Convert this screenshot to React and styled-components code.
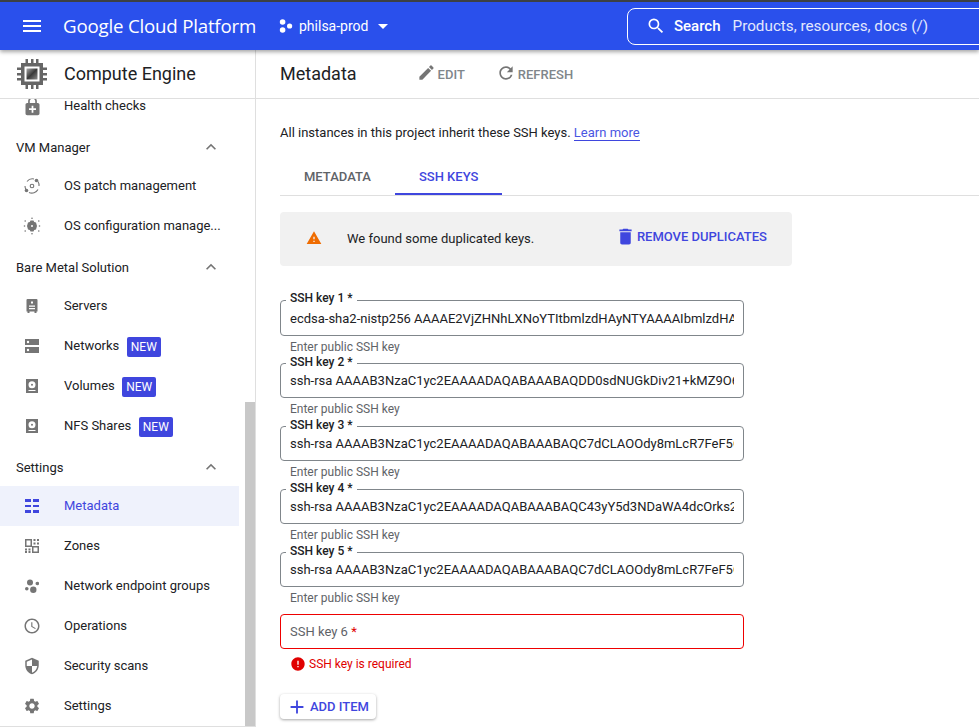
import React from "react";
import styled, { createGlobalStyle } from "styled-components";
import {
  MdMenu,
  MdSearch,
  MdArrowDropDown,
  MdEdit,
  MdRefresh,
  MdExpandLess,
  MdWarning,
  MdDelete,
  MdError,
  MdAdd,
  MdAccessTime,
  MdSettings,
  MdEnhancedEncryption,
  MdSecurity,
} from "react-icons/md";

const GlobalStyle = createGlobalStyle`
  html, body {
    margin: 0;
    height: 100%;
    overflow: hidden;
    background: #fff;
    font-family: Roboto, "Liberation Sans", sans-serif;
  }
`;

const ChipIcon = () => (
  <svg width="32" height="32" viewBox="0 0 32 32">
    <defs>
      <linearGradient id="chipFill" x1="0" y1="0" x2="1" y2="1">
        <stop offset="0" stopColor="#a8a8a8" />
        <stop offset="0.5" stopColor="#3a3a3a" />
        <stop offset="1" stopColor="#8c8c8c" />
      </linearGradient>
    </defs>
    <path
      fill="#666"
      d="M9.500 1H12v4H9.500zM15 1h2.500v4H15zM20 1h2.500v4H20zM9.500 27H12v4H9.500zM15 27h2.500v4H15zM20 27h2.500v4H20zM1 9.500h4V12H1zM1 15h4v2.500H1zM1 20h4v2.500H1zM27 9.500h4V12h-4zM27 15h4v2.500h-4zM27 20h4v2.500h-4z"
    />
    <path fill="#666" fillRule="evenodd" d="M5 5h22v22H5zM8.500 8.500v15h15v-15z" />
    <rect x="10.500" y="10.500" width="11" height="11" fill="url(#chipFill)" />
  </svg>
);

const ProjectIcon = () => (
  <svg width="14" height="14" viewBox="0 0 14 14" fill="#fff">
    <circle cx="3.600" cy="3" r="2.800" />
    <circle cx="3.600" cy="11" r="2.800" />
    <circle cx="10.600" cy="7" r="2.600" />
  </svg>
);

const PatchIcon = () => (
  <svg width="18" height="18" viewBox="0 0 18 18" fill="none" stroke="#757575" strokeWidth="1.100">
    <path d="M4 4.500A7 7 0 0 1 11 2" />
    <path d="M2 9a7 7 0 0 0 1 3.500" />
    <path d="M6 15.500a7 7 0 0 0 9-3" />
    <path d="M15 4.500A7 7 0 0 1 16 9" />
    <circle cx="9" cy="9" r="1.800" />
    <circle cx="13.500" cy="3.500" r="1.800" fill="#757575" stroke="none" />
    <circle cx="3.500" cy="13.500" r="1.800" fill="#757575" stroke="none" />
  </svg>
);

const ConfigIcon = () => (
  <svg width="18" height="18" viewBox="0 0 18 18" fill="#757575">
    <path
      fillRule="evenodd"
      d="M7.500 3.500h3l.7 1.600 1.800.4L14 9l-1 3.500-1.800.4-.7 1.600h-3l-.7-1.600-1.800-.4L4 9l1-3.500 1.800-.4zM9 8a1 1 0 1 0 0 2 1 1 0 0 0 0-2z"
    />
    <circle cx="9" cy="1.300" r=".8" />
    <circle cx="9" cy="16.700" r=".8" />
    <circle cx="2.200" cy="4" r=".8" />
    <circle cx="15.800" cy="4" r=".8" />
    <circle cx="2.200" cy="14" r=".8" />
    <circle cx="15.800" cy="14" r=".8" />
    <circle cx="1.500" cy="9" r=".8" />
    <circle cx="16.500" cy="9" r=".8" />
  </svg>
);

const ServerIcon = () => (
  <svg width="14" height="16" viewBox="0 0 14 16" fill="#757575">
    <path
      fillRule="evenodd"
      d="M2.500 1h9a1 1 0 0 1 1 1v11.500h-1V15h-2v-1.500h-5V15h-2v-1.500h-1V2a1 1 0 0 1 1-1zM6 3.500v2h2v-2zM4 7.500v1.200h6V7.500zM4 10v1.200h6V10z"
    />
  </svg>
);

const NetworkIcon = () => (
  <svg width="14" height="14" viewBox="0 0 14 14" fill="#757575">
    <path
      fillRule="evenodd"
      d="M0 0h14v6H0zM3 1.800a1.200 1.200 0 1 0 0 2.400 1.200 1.200 0 0 0 0-2.400zM0 8h14v6H0zM3 9.800a1.200 1.200 0 1 0 0 2.400 1.200 1.200 0 0 0 0-2.400z"
    />
  </svg>
);

const DiskIcon = () => (
  <svg width="12" height="14" viewBox="0 0 12 14" fill="#757575">
    <path fillRule="evenodd" d="M0 0h12v14H0zM6 2.200a3.500 3.500 0 1 0 0 7 3.500 3.500 0 0 0 0-7zM2.500 11v1h7v-1z" />
    <circle cx="6" cy="5.700" r="1" />
  </svg>
);

const MetadataIcon = () => (
  <svg width="14" height="14" viewBox="0 0 14 14" fill="#3f46de">
    <path d="M0 0h6v3H0zM8 0h6v3H8zM0 6h6v2H0zM8 6h6v2H8zM0 11h6v3H0zM8 11h6v3H8z" />
  </svg>
);

const ZonesIcon = () => (
  <svg width="14" height="14" viewBox="0 0 14 14" fill="#757575">
    <path fillRule="evenodd" d="M0 0h7v8H0zM1.500 1.500v5h4v-5zM7 7h7v7H7zM8.500 8.500v4h4v-4z" />
    <path d="M8.500 0h2v2h-2zM12 0h2v2h-2zM8.500 3.500h2v2h-2zM12 3.500h2v2h-2zM0 9.500h2v2H0zM3.500 9.500h2v2h-2zM0 12h2v2H0zM3.500 12h2v2h-2z" />
  </svg>
);

const EndpointIcon = () => (
  <svg width="14" height="14" viewBox="0 0 14 14" fill="#757575">
    <circle cx="5" cy="3.500" r="3" />
    <circle cx="12.300" cy="4.500" r="1.800" />
    <circle cx="1.800" cy="9.800" r="1.800" />
    <circle cx="8.300" cy="10.800" r="3.200" />
  </svg>
);

const ICON_SIZE = 18;

const navGroups = [
  {
    items: [{ label: "Health checks", icon: <MdEnhancedEncryption size={21} /> }],
  },
  {
    title: "VM Manager",
    items: [
      { label: "OS patch management", icon: <PatchIcon /> },
      { label: "OS configuration manage...", icon: <ConfigIcon /> },
    ],
  },
  {
    title: "Bare Metal Solution",
    items: [
      { label: "Servers", icon: <ServerIcon /> },
      { label: "Networks", icon: <NetworkIcon />, isNew: true },
      { label: "Volumes", icon: <DiskIcon />, isNew: true },
      { label: "NFS Shares", icon: <DiskIcon />, isNew: true },
    ],
  },
  {
    title: "Settings",
    items: [
      { label: "Metadata", icon: <MetadataIcon />, active: true },
      { label: "Zones", icon: <ZonesIcon /> },
      { label: "Network endpoint groups", icon: <EndpointIcon /> },
      { label: "Operations", icon: <MdAccessTime size={ICON_SIZE} /> },
      { label: "Security scans", icon: <MdSecurity size={ICON_SIZE} /> },
      { label: "Settings", icon: <MdSettings size={ICON_SIZE} /> },
    ],
  },
];

const sshKeys = [
  "ecdsa-sha2-nistp256 AAAAE2VjZHNhLXNoYTItbmlzdHAyNTYAAAAIbmlzdHAyNTYAAABBBH",
  "ssh-rsa AAAAB3NzaC1yc2EAAAADAQABAAABAQDD0sdNUGkDiv21+kMZ9O6xQmPzL1tYb3",
  "ssh-rsa AAAAB3NzaC1yc2EAAAADAQABAAABAQC7dCLAOOdy8mLcR7FeF5OtQwErTy2mKd8",
  "ssh-rsa AAAAB3NzaC1yc2EAAAADAQABAAABAQC43yY5d3NDaWA4dcOrks2pLmNqRt7Xv1",
  "ssh-rsa AAAAB3NzaC1yc2EAAAADAQABAAABAQC7dCLAOOdy8mLcR7FeF5OtQwErTy2mKd8",
];

export default function App() {
  return (
    <Page>
      <GlobalStyle />
      <TopBar>
        <MenuButton>
          <MdMenu size={24} />
        </MenuButton>
        <Brand>Google Cloud Platform</Brand>
        <ProjectPicker>
          <ProjectIcon />
          <ProjectName>philsa-prod</ProjectName>
          <MdArrowDropDown size={24} />
        </ProjectPicker>
        <SearchBox>
          <MdSearch size={20} />
          <SearchLabel>Search</SearchLabel>
          <SearchHint>Products, resources, docs (/)</SearchHint>
        </SearchBox>
      </TopBar>
      <Body>
        <Sidebar>
          <SidebarHead>
            <ChipSlot>
              <ChipIcon />
            </ChipSlot>
            <ProductName>Compute Engine</ProductName>
          </SidebarHead>
          <NavScroll>
            <NavList>
              {navGroups.map((group, index) => (
                <div key={index}>
                  {group.title && (
                    <GroupTitle>
                      {group.title}
                      <MdExpandLess size={20} />
                    </GroupTitle>
                  )}
                  {group.items.map((item) => (
                    <NavItem key={item.label} $active={item.active}>
                      <NavIcon>{item.icon}</NavIcon>
                      <NavLabel>{item.label}</NavLabel>
                      {item.isNew && <NewBadge>NEW</NewBadge>}
                    </NavItem>
                  ))}
                </div>
              ))}
            </NavList>
            <ScrollThumb />
          </NavScroll>
        </Sidebar>
        <Main>
          <PageHead>
            <PageTitle>Metadata</PageTitle>
            <HeadAction>
              <MdEdit size={19} />
              EDIT
            </HeadAction>
            <HeadAction>
              <MdRefresh size={20} />
              REFRESH
            </HeadAction>
          </PageHead>
          <Content>
            <Intro>
              All instances in this project inherit these SSH keys. <LearnMore>Learn more</LearnMore>
            </Intro>
            <Tabs>
              <Tab>METADATA</Tab>
              <Tab $active>SSH KEYS</Tab>
            </Tabs>
            <Alert>
              <AlertIcon>
                <MdWarning size={16} />
              </AlertIcon>
              <AlertText>We found some duplicated keys.</AlertText>
              <AlertAction>
                <MdDelete size={21} />
                REMOVE DUPLICATES
              </AlertAction>
            </Alert>
            <Fields>
              {sshKeys.map((key, index) => (
                <Field key={index}>
                  <FieldBox $first={index === 0}>
                    <FieldLabel $first={index === 0}>SSH key {index + 1} *</FieldLabel>
                    <FieldInput $first={index === 0} readOnly value={key} />
                  </FieldBox>
                  <FieldHint>Enter public SSH key</FieldHint>
                </Field>
              ))}
              <ErrorBox>
                SSH key 6&nbsp;<Required>*</Required>
              </ErrorBox>
              <ErrorRow>
                <MdError size={16} />
                SSH key is required
              </ErrorRow>
            </Fields>
            <AddButton>
              <MdAdd size={22} />
              ADD ITEM
            </AddButton>
          </Content>
        </Main>
      </Body>
    </Page>
  );
}

const Page = styled.div`
  height: 727px;
  display: flex;
  flex-direction: column;
  overflow: hidden;
  border-top: 2px solid #3c4043;
  box-sizing: border-box;
`;

const TopBar = styled.header`
  height: 48px;
  flex: none;
  display: flex;
  align-items: center;
  background: #2a50ec;
  color: #fff;
  box-shadow: 0 2px 4px rgba(0, 0, 0, 0.35);
  position: relative;
  z-index: 2;
`;

const MenuButton = styled.div`
  width: 24px;
  height: 24px;
  margin-left: 20px;
  display: flex;
`;

const Brand = styled.div`
  margin-left: 19px;
  margin-bottom: 2px;
  width: 193px;
  font-family: "Open Sans", sans-serif;
  font-size: 18.700px;
  letter-spacing: -0.2px;
  white-space: nowrap;
`;

const ProjectPicker = styled.div`
  display: flex;
  align-items: center;
  margin-left: 23px;
  width: 348px;
`;

const ProjectName = styled.span`
  margin-left: 6px;
  margin-right: 3px;
  font-size: 14px;
`;

const SearchBox = styled.div`
  flex: 1;
  height: 35px;
  margin-right: -8px;
  padding-left: 18px;
  display: flex;
  align-items: center;
  border: 1px solid #fff;
  border-radius: 8px;
  font-size: 15px;
`;

const SearchLabel = styled.span`
  margin-left: 8px;
  font-weight: 500;
`;

const SearchHint = styled.span`
  margin-left: 12px;
  font-size: 15.250px;
  color: #e3e8fd;
`;

const Body = styled.div`
  flex: 1;
  min-height: 0;
  display: flex;
`;

const Sidebar = styled.aside`
  width: 255px;
  flex: none;
  display: flex;
  flex-direction: column;
  border-right: 1px solid #dfdfdf;
  border-bottom: 1px solid #dfdfdf;
`;

const SidebarHead = styled.div`
  height: 48px;
  flex: none;
  display: flex;
  align-items: center;
  border-bottom: 1px solid #dfdfdf;
`;

const ChipSlot = styled.div`
  width: 64px;
  padding-left: 16px;
  box-sizing: border-box;
  display: flex;
`;

const ProductName = styled.div`
  padding-bottom: 2px;
  font-size: 18px;
  color: #202124;
`;

const NavScroll = styled.div`
  flex: 1;
  min-height: 0;
  overflow: hidden;
  position: relative;
`;

const NavList = styled.nav`
  margin-top: -13px;
`;

const GroupTitle = styled.div`
  height: 40px;
  width: 245px;
  padding: 2px 24px 0 16px;
  box-sizing: border-box;
  display: flex;
  align-items: center;
  justify-content: space-between;
  font-size: 13px;
  color: #202124;

  svg {
    color: #757575;
  }
`;

const NavItem = styled.div`
  height: 40px;
  width: 239px;
  display: flex;
  align-items: center;
  font-size: 13px;
  color: ${(p) => (p.$active ? "#3f46de" : "#202124")};
  background: ${(p) => (p.$active ? "#eff2fc" : "transparent")};
`;

const NavIcon = styled.span`
  width: 64px;
  flex: none;
  display: flex;
  justify-content: center;
  color: #757575;
`;

const NavLabel = styled.span`
  margin-bottom: 2px;
  white-space: nowrap;
`;

const NewBadge = styled.span`
  margin-left: 7.500px;
  margin-top: 1px;
  padding: 0 4px;
  height: 20px;
  line-height: 20px;
  border-radius: 2px;
  background: #3f46de;
  color: #fff;
  font-size: 12px;
`;

const ScrollThumb = styled.div`
  position: absolute;
  right: 0;
  top: 303px;
  bottom: 0;
  width: 10px;
  background: #c8c8c8;
`;

const Main = styled.main`
  flex: 1;
  min-width: 0;
`;

const PageHead = styled.div`
  height: 48px;
  display: flex;
  align-items: center;
  padding-left: 24px;
  border-bottom: 1px solid #dfdfdf;
`;

const PageTitle = styled.h1`
  margin: 0 60px 2px 0;
  font-size: 18px;
  font-weight: 400;
  color: #202124;
`;

const HeadAction = styled.div`
  display: flex;
  align-items: center;
  gap: 2px;
  margin-right: 31px;
  padding-top: 1px;
  font-size: 13px;
  font-weight: 500;
  color: #80868b;

  svg {
    color: #757575;
    margin-top: -4px;
  }
`;

const Content = styled.div`
  padding: 26px 0 0 24px;
`;

const Intro = styled.p`
  margin: 0;
  height: 16px;
  line-height: 16px;
  font-size: 13px;
  color: #202124;
`;

const LearnMore = styled.a`
  color: #4a56e2;
  border-bottom: 1px solid #3f46de;
`;

const Tabs = styled.div`
  margin-top: 14px;
  height: 40px;
  display: flex;
  border-bottom: 1px solid #dfdfdf;
`;

const Tab = styled.div`
  padding: 4px 24px 0;
  height: 40px;
  box-sizing: border-box;
  display: flex;
  align-items: center;
  font-size: 13px;
  font-weight: 500;
  color: ${(p) => (p.$active ? "#3f46de" : "#5f6368")};
  border-bottom: 2px solid ${(p) => (p.$active ? "#3f46de" : "transparent")};
`;

const Alert = styled.div`
  margin-top: 16px;
  width: 512px;
  height: 54px;
  padding-bottom: 2px;
  box-sizing: border-box;
  display: flex;
  align-items: center;
  background: #f1f1f1;
  border-radius: 4px;
`;

const AlertIcon = styled.span`
  margin-left: 26px;
  display: flex;
  color: #ef6c00;
`;

const AlertText = styled.span`
  margin-left: 25px;
  font-size: 13px;
  color: #202124;
`;

const AlertAction = styled.span`
  margin-left: auto;
  margin-right: 25px;
  margin-top: -4px;
  display: flex;
  align-items: center;
  gap: 1px;
  font-size: 13px;
  font-weight: 500;
  color: #3f46de;
`;

const Fields = styled.div`
  margin-top: 34px;
  width: 464px;
`;

const Field = styled.div`
  height: 63px;
`;

const FieldBox = styled.div`
  position: relative;
  height: ${(p) => (p.$first ? "36px" : "35px")};
  box-sizing: border-box;
  border: 1px solid #80868b;
  border-radius: 4px;
  padding: 0 9px;
  display: flex;
  align-items: center;
`;

const FieldLabel = styled.label`
  position: absolute;
  left: 5px;
  top: ${(p) => (p.$first ? "-10px" : "-9px")};
  padding: 0 4px;
  height: 14px;
  line-height: 14px;
  background: #fff;
  font-size: 12px;
  font-weight: 500;
  color: #202124;
`;

const FieldInput = styled.input`
  flex: 1;
  min-width: 0;
  border: 0;
  outline: 0;
  padding: 0;
  margin-top: ${(p) => (p.$first ? "1px" : "0")};
  background: transparent;
  font-family: inherit;
  font-size: 13px;
  color: #202124;
`;

const FieldHint = styled.div`
  padding: 4px 0 0 10px;
  height: 15px;
  line-height: 15px;
  font-size: 12px;
  color: #5f6368;
`;

const ErrorBox = styled.div`
  margin-top: -1px;
  height: 35px;
  box-sizing: border-box;
  border: 1px solid #ee0000;
  border-radius: 4px;
  padding: 0 9px;
  display: flex;
  align-items: center;
  font-size: 13px;
  color: #5f6368;
`;

const Required = styled.span`
  color: #e00000;
`;

const ErrorRow = styled.div`
  margin-top: 7px;
  padding-left: 10px;
  display: flex;
  align-items: center;
  gap: 3px;
  height: 16px;
  font-size: 12px;
  color: #e00000;

  svg {
    flex: none;
  }
`;

const AddButton = styled.div`
  margin-top: 22px;
  width: 96px;
  height: 25px;
  box-sizing: border-box;
  padding-left: 6px;
  display: flex;
  align-items: center;
  gap: 2px;
  border-radius: 4px;
  background: #fff;
  box-shadow: 0 1px 3px rgba(0, 0, 0, 0.35);
  font-size: 13px;
  font-weight: 500;
  color: #3f46de;
`;
